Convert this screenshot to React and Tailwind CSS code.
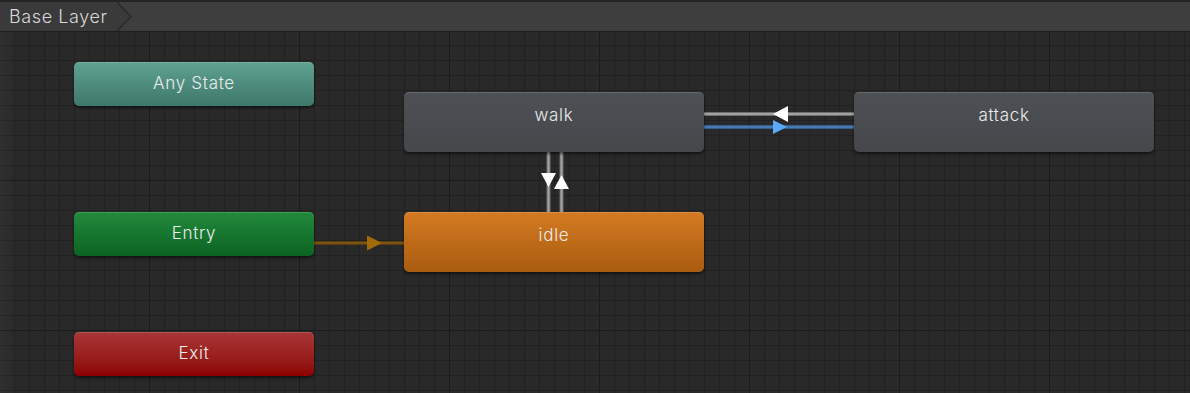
import React from 'react';

const nodes = [
  { name: 'Any State', x: 74, y: 30, w: 240, h: 44, cls: 'bg-gradient-to-b from-[#5fa291] to-[#3e786b]' },
  { name: 'Entry', x: 74, y: 180, w: 240, h: 44, cls: 'bg-gradient-to-b from-[#228a3b] to-[#0b6323]' },
  { name: 'Exit', x: 74, y: 300, w: 240, h: 44, cls: 'bg-gradient-to-b from-[#a83636] to-[#8c0000]' },
  { name: 'walk', x: 404, y: 60, w: 300, h: 60, cls: 'bg-gradient-to-b from-[#4d5054] to-[#45474b]', state: true },
  { name: 'attack', x: 854, y: 60, w: 300, h: 60, cls: 'bg-gradient-to-b from-[#4d5054] to-[#45474b]', state: true },
  { name: 'idle', x: 404, y: 180, w: 300, h: 60, cls: 'bg-gradient-to-b from-[#d47a22] to-[#a95d0f]', state: true },
];

// position is the node's place on the graph canvas
const StateNode = ({ node }) => (
  <div
    className={`absolute rounded-[5px] shadow-[0_2px_3px_rgba(0,0,0,0.55),inset_0_1px_0_rgba(255,255,255,0.14)] text-[17px] font-light tracking-[0.7px] text-[#ececec] text-center ${node.cls} ${node.state ? 'pt-[13px] leading-[20px]' : 'flex items-center justify-center'}`}
    style={{ left: node.x, top: node.y, width: node.w, height: node.h }}
  >
    {node.name}
  </div>
);

const Transitions = () => (
  <svg className="absolute inset-0" width="1190" height="361">
    {/* walk <-> attack */}
    <line x1="704" y1="82" x2="854" y2="82" stroke="#6e6e6e" strokeWidth="4" />
    <line x1="704" y1="82" x2="854" y2="82" stroke="#a2a2a2" strokeWidth="2" />
    <polygon points="773,82 788,74 788,90" fill="#ffffff" />
    <line x1="704" y1="95" x2="854" y2="95" stroke="#325c8e" strokeWidth="4" />
    <line x1="704" y1="95" x2="854" y2="95" stroke="#4878b0" strokeWidth="2" />
    <polygon points="787,95 773,88 773,102" fill="#5aa8f8" />

    {/* walk <-> idle */}
    <line x1="548.5" y1="120" x2="548.5" y2="180" stroke="#6e6e6e" strokeWidth="4" />
    <line x1="548.5" y1="120" x2="548.5" y2="180" stroke="#a2a2a2" strokeWidth="2" />
    <line x1="561.5" y1="120" x2="561.5" y2="180" stroke="#6e6e6e" strokeWidth="4" />
    <line x1="561.5" y1="120" x2="561.5" y2="180" stroke="#a2a2a2" strokeWidth="2" />
    <polygon points="548.5,155 541,141 556,141" fill="#ffffff" />
    <polygon points="561.5,143 554,157 569,157" fill="#ffffff" />

    {/* entry -> idle */}
    <line x1="314" y1="211" x2="404" y2="211" stroke="#5a3e12" strokeWidth="4" />
    <line x1="314" y1="211" x2="404" y2="211" stroke="#7a5212" strokeWidth="2" />
    <polygon points="382,211 367,203.5 367,218.5" fill="#a36a0b" />
  </svg>
);

export default function App() {
  return (
    <div className="w-[1190px] h-[393px] flex flex-col bg-[#282828] overflow-hidden font-['Inter','Liberation_Sans',sans-serif]">
      <div className="h-[32px] shrink-0 flex items-stretch bg-[#3e3e3e] border-t-2 border-[#242424] border-b border-b-[#1e1e1e]">
        <div className="flex items-center pl-[9px] pr-[8px] bg-[#3a3a3a] text-[18px] font-light text-[#d8d8d8] tracking-[0.6px]">
          Base Layer
        </div>
        <svg width="16" height="29" viewBox="0 0 16 29" className="shrink-0">
          <polygon points="0,0 2,0 15,14.5 2,29 0,29" fill="#3a3a3a" />
          <polyline points="1,0 15,14.5 1,29" fill="none" stroke="#2a2a2a" strokeWidth="1.5" />
        </svg>
      </div>
      <div className="relative flex-1 bg-[#292929] bg-[linear-gradient(to_right,#1b1b1b_1px,transparent_1px),linear-gradient(to_bottom,#1b1b1b_1px,transparent_1px),linear-gradient(to_right,#212121_1px,transparent_1px),linear-gradient(to_bottom,#212121_1px,transparent_1px)] bg-[size:150px_150px,150px_150px,15px_15px,15px_15px] bg-[position:149px_0,0_148px,14px_0,0_13px]">
        <div className="absolute inset-y-0 left-0 w-[18px] bg-gradient-to-r from-[rgba(255,255,255,0.03)] to-transparent" />
        <Transitions />
        {nodes.map(n => (
          <StateNode key={n.name} node={n} />
        ))}
      </div>
    </div>
  );
}
